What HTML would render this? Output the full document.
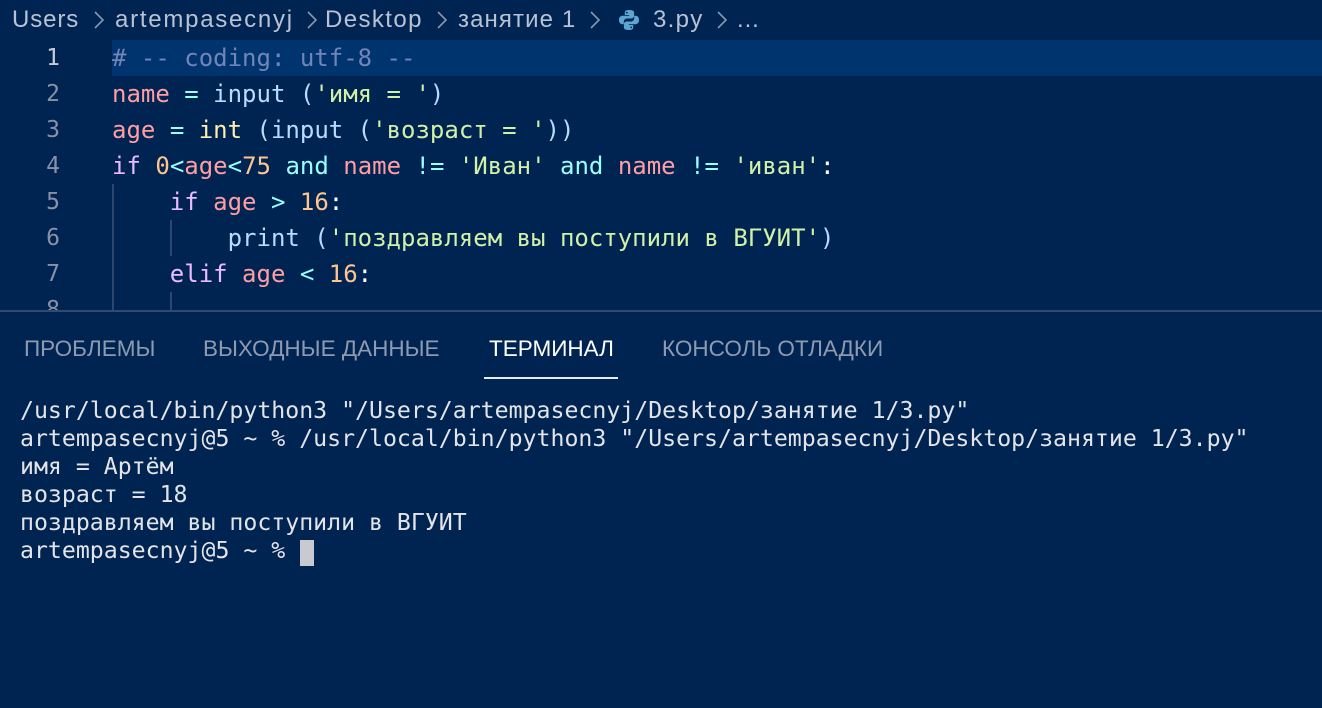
<!DOCTYPE html>
<html><head><meta charset="utf-8"><style>
*{margin:0;padding:0;box-sizing:border-box}
body{width:1322px;height:708px;background:#002451;overflow:hidden;position:relative;font-family:"Liberation Sans","DejaVu Sans",sans-serif}
.bi{position:absolute;top:4px;font-size:24px;letter-spacing:0.9px;color:#b8c2d4;white-space:nowrap;height:32px;line-height:32px}
.ch{position:absolute;top:11px}
.hl{position:absolute;left:112px;top:40px;width:1210px;height:36px;background:#00346e}
.ln{position:absolute;left:0;width:60px;text-align:right;font-family:"DejaVu Sans Mono",monospace;font-size:23px;color:#8891a6;height:36px;line-height:36px}
.code{position:absolute;left:112px;font-family:"DejaVu Sans Mono",monospace;font-size:24px;white-space:pre;height:36px;line-height:36px;color:#ffffff}
.r{color:#ff9da4}.c{color:#99ffff}.b{color:#bbdaff}.g{color:#d1f1a9}.y{color:#ffeead}.o{color:#ffc58f}.p{color:#ebbbff}.cm{color:#7285b7}
.guide{position:absolute;width:2px;background:#2e4570}
.sep{position:absolute;left:0;top:310px;width:1322px;height:2px;background:#34496e}
.tab{position:absolute;top:336px;font-size:22.5px;color:#8e9ab0;white-space:nowrap}
.term{position:absolute;left:20px;font-family:"DejaVu Sans Mono",monospace;font-size:23.2px;color:#e2e4e8;white-space:pre;line-height:28px}
</style></head><body>
<div class="bi" style="left:12px">Users</div>
<svg class="ch" style="left:93px" width="12" height="18" viewBox="0 0 12 18"><path d="M2 1l8 8-8 8" fill="none" stroke="#8a96ad" stroke-width="1.6"/></svg>
<div class="bi" style="left:115px;letter-spacing:1.75px">artempasecnyj</div>
<svg class="ch" style="left:306px" width="12" height="18" viewBox="0 0 12 18"><path d="M2 1l8 8-8 8" fill="none" stroke="#8a96ad" stroke-width="1.6"/></svg>
<div class="bi" style="left:325px;letter-spacing:1.4px">Desktop</div>
<svg class="ch" style="left:436px" width="12" height="18" viewBox="0 0 12 18"><path d="M2 1l8 8-8 8" fill="none" stroke="#8a96ad" stroke-width="1.6"/></svg>
<div class="bi" style="left:458px;letter-spacing:1.1px">занятие 1</div>
<svg class="ch" style="left:589px" width="12" height="18" viewBox="0 0 12 18"><path d="M2 1l8 8-8 8" fill="none" stroke="#8a96ad" stroke-width="1.6"/></svg>
<svg style="position:absolute;left:617px;top:8px" width="24" height="24" viewBox="0 0 24 24"><path d="M11.8 2c-4 0-4 1.7-4 2.5V7h4.3v.8H5.5C3.6 7.8 2 9.3 2 12s1.4 4.2 3.3 4.2h1.5v-2.4c0-1.8 1.5-3.3 3.3-3.3h4.3c1.5 0 2.7-1.2 2.7-2.7V4.5C17.1 2.7 15.4 2 11.8 2z" fill="#5da5d3"/><path d="M12.2 22c4 0 4-1.7 4-2.5V17h-4.3v-.8h6.6c1.9 0 3.5-1.5 3.5-4.2s-1.4-4.2-3.3-4.2h-1.5v2.4c0 1.8-1.5 3.3-3.3 3.3H9.6c-1.5 0-2.7 1.2-2.7 2.7v3.3C6.9 21.3 8.6 22 12.2 22z" fill="#5da5d3"/><circle cx="9.8" cy="4.6" r=".9" fill="#002451"/><circle cx="14.2" cy="19.4" r=".9" fill="#002451"/></svg>
<div class="bi" style="left:653px;letter-spacing:1.3px">3.py</div>
<svg class="ch" style="left:716px" width="12" height="18" viewBox="0 0 12 18"><path d="M2 1l8 8-8 8" fill="none" stroke="#8a96ad" stroke-width="1.6"/></svg>
<div class="bi" style="left:737px">...</div>
<div class="hl"></div>
<div class="guide" style="left:112px;top:184px;height:126px"></div>
<div class="guide" style="left:170px;top:220px;height:36px"></div>
<div class="guide" style="left:170px;top:292px;height:18px"></div>
<div class="ln" style="top:40px;color:#c5ccd8">1</div>
<div class="ln" style="top:76px">2</div>
<div class="ln" style="top:112px">3</div>
<div class="ln" style="top:148px">4</div>
<div class="ln" style="top:184px">5</div>
<div class="ln" style="top:220px">6</div>
<div class="ln" style="top:256px">7</div>
<div class="ln" style="top:292px;height:18px;overflow:hidden">8</div>
<div class="code" style="top:40px"><span class="cm"># -- coding: utf-8 --</span></div>
<div class="code" style="top:76px"><span class="r">name</span> <span class="c">=</span> <span class="b">input</span> <span class="b">(</span><span class="g">'имя = '</span><span class="b">)</span></div>
<div class="code" style="top:112px"><span class="r">age</span> <span class="c">=</span> <span class="y">int</span> <span class="b">(input (</span><span class="g">'возраст = '</span><span class="b">))</span></div>
<div class="code" style="top:148px"><span class="p">if</span> <span class="o">0</span><span class="c">&lt;</span><span class="r">age</span><span class="c">&lt;</span><span class="o">75</span> <span class="c">and</span> <span class="r">name</span> <span class="c">!=</span> <span class="g">'Иван'</span> <span class="c">and</span> <span class="r">name</span> <span class="c">!=</span> <span class="g">'иван'</span>:</div>
<div class="code" style="top:184px">    <span class="p">if</span> <span class="r">age</span> <span class="c">&gt;</span> <span class="o">16</span>:</div>
<div class="code" style="top:220px">        <span class="b">print (</span><span class="g">'поздравляем вы поступили в ВГУИТ'</span><span class="b">)</span></div>
<div class="code" style="top:256px">    <span class="p">elif</span> <span class="r">age</span> <span class="c">&lt;</span> <span class="o">16</span>:</div>
<div class="sep"></div>
<div class="tab" style="left:24px">ПРОБЛЕМЫ</div>
<div class="tab" style="left:203px">ВЫХОДНЫЕ ДАННЫЕ</div>
<div class="tab" style="left:489px;color:#ffffff">ТЕРМИНАЛ</div>
<div class="tab" style="left:662px">КОНСОЛЬ ОТЛАДКИ</div>
<div style="position:absolute;left:484px;top:377px;width:134px;height:2px;background:#e8ecf2"></div>
<div class="term" style="top:397px">/usr/local/bin/python3 "/Users/artempasecnyj/Desktop/занятие 1/3.py"
artempasecnyj@5 ~ % /usr/local/bin/python3 "/Users/artempasecnyj/Desktop/занятие 1/3.py"
имя = Артём
возраст = 18
поздравляем вы поступили в ВГУИТ
artempasecnyj@5 ~ % </div>
<div style="position:absolute;left:300px;top:540px;width:14px;height:26px;background:#c8cad0"></div>
</body></html>
